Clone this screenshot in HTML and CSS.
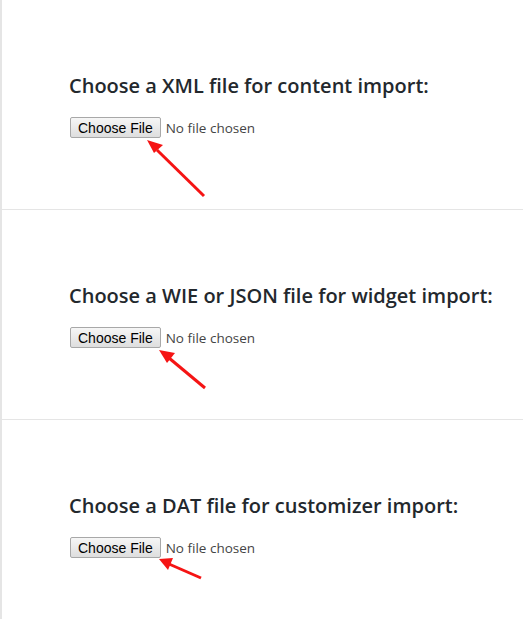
FILE: index.html
```html
<!DOCTYPE html>
<html lang="en">
<head>
    <meta charset="UTF-8">
    <meta name="viewport" content="width=device-width, initial-scale=1.0">
    <title>Import Demo Data</title>
    <link rel="stylesheet" href="styles.css">
</head>
<body>
    <div class="panel">
        <div class="import-box">
            <h3>Choose a XML file for content import:</h3>
            <div class="file-row">
                <input type="file" class="file-field">
                <svg class="arrow arrow-one" width="80" height="80" viewBox="0 0 80 80">
                    <line x1="10" y1="10" x2="57" y2="56" stroke="#f51414" stroke-width="3"/>
                    <polygon points="0,0 16,5 7,13" fill="#f51414"/>
                </svg>
            </div>
        </div>
        <div class="import-box">
            <h3>Choose a WIE or JSON file for widget import:</h3>
            <div class="file-row">
                <input type="file" class="file-field">
                <svg class="arrow arrow-two" width="80" height="80" viewBox="0 0 80 80">
                    <line x1="10" y1="8" x2="46" y2="38" stroke="#f51414" stroke-width="3"/>
                    <polygon points="0,0 16,3 8,13" fill="#f51414"/>
                </svg>
            </div>
        </div>
        <div class="import-box">
            <h3>Choose a DAT file for customizer import:</h3>
            <div class="file-row">
                <input type="file" class="file-field">
                <svg class="arrow arrow-three" width="80" height="80" viewBox="0 0 80 80">
                    <line x1="10" y1="5" x2="42" y2="19" stroke="#f51414" stroke-width="3"/>
                    <polygon points="0,0 14,-1 9,11" fill="#f51414"/>
                </svg>
            </div>
        </div>
    </div>
</body>
</html>
```

FILE: styles.css
```css
body {
    margin: 0;
    background: #fff;
    font-family: "Open Sans", sans-serif;
    color: #23282d;
}
.panel {
    border-left: 2px solid #e5e5e5;
    min-height: 619px;
}
.import-box {
    height: 210px;
    box-sizing: border-box;
    padding: 72px 0 0 67px;
    border-bottom: 1px solid #e5e5e5;
}
.import-box:last-child {
    border-bottom: none;
}
h3 {
    margin: 0 0 17px;
    font-size: 20px;
    font-weight: 600;
    line-height: 28px;
}
.file-row {
    position: relative;
    height: 21px;
}
.file-field {
    display: block;
    font-family: "Open Sans", sans-serif;
    font-size: 13.5px;
    color: #444;
    margin-left: 1px;
    height: 21px;
    line-height: 21px;
}
.file-field::file-selector-button {
    font-family: Arial, "Liberation Sans", sans-serif;
    font-size: 14px;
    color: #000;
    height: 21px;
    padding: 0 7px;
    margin-right: 5px;
    border: 1px solid #a8a8a8;
    border-radius: 2px;
    background: linear-gradient(#f6f6f6, #dedede);
}
.arrow {
    position: absolute;
    overflow: visible;
}
.arrow-one {
    left: 78px;
    top: 23px;
}
.arrow-two {
    left: 90px;
    top: 23px;
}
.arrow-three {
    left: 90px;
    top: 22px;
}
```
